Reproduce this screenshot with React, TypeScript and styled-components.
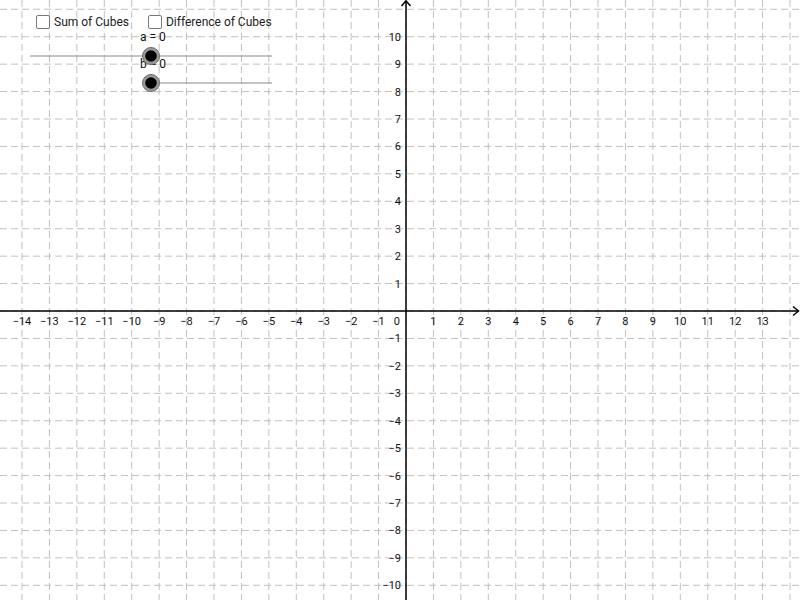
import React from "react";
import styled, { createGlobalStyle } from "styled-components";

const GlobalStyle = createGlobalStyle`
  html, body { margin: 0; padding: 0; background: #ffffff; overflow: hidden; }
  #root { width: 800px; height: 600px; }
`;

const Page = styled.div`
  position: relative;
  width: 800px;
  height: 600px;
  background: #ffffff;
  font-family: "Roboto", "Liberation Sans", sans-serif;
  overflow: hidden;
`;

const GraphSvg = styled.svg`
  display: block;
  width: 800px;
  height: 600px;
`;

const Controls = styled.div`
  position: absolute;
  top: 14.5px;
  left: 36px;
  display: flex;
  align-items: center;
  gap: 19px;
`;

const CheckItem = styled.label`
  display: flex;
  align-items: center;
  gap: 4px;
  font-size: 12px;
  color: #222;
  cursor: pointer;
  line-height: 14px;
`;

const Box = styled.span`
  display: inline-block;
  box-sizing: border-box;
  width: 14px;
  height: 14px;
  border: 1.5px solid #7a7a7a;
  border-radius: 2px;
  background: #fff;
`;

const OX = 406;
const OY = 311;
const U = 27.43;

const fmt = (n: number) => (n < 0 ? `\u2212${Math.abs(n)}` : `${n}`);

const Grid: React.FC = () => {
  const v: number[] = [];
  for (let k = -15; k <= 15; k++) v.push(k);
  return (
    <g stroke="#c0c0c0" strokeWidth={1} strokeDasharray="7 4">
      {v.map((k) => {
        const x = OX + k * U;
        return x >= 0 && x <= 800 ? (
          <line key={`v${k}`} x1={x} y1={0} x2={x} y2={600} />
        ) : null;
      })}
      {v.map((k) => {
        const y = OY + k * U;
        return y >= 0 && y <= 600 ? (
          <line key={`h${k}`} x1={0} y1={y} x2={800} y2={y} />
        ) : null;
      })}
    </g>
  );
};

const Axes: React.FC = () => (
  <g stroke="#000" strokeWidth={1.5} fill="none">
    <line x1={0} y1={OY} x2={798} y2={OY} />
    <line x1={OX} y1={1} x2={OX} y2={600} />
    <polyline points={`${793},${OY - 4.5} ${798.5},${OY} ${793},${OY + 4.5}`} />
    <polyline points={`${OX - 4.5},${6} ${OX},${0.8} ${OX + 4.5},${6}`} />
  </g>
);

const TickLabels: React.FC = () => {
  const xs: number[] = [];
  for (let k = -14; k <= 13; k++) if (k !== 0) xs.push(k);
  const ys: number[] = [];
  for (let k = -10; k <= 10; k++) if (k !== 0) ys.push(k);
  return (
    <g fontFamily="Roboto, 'Liberation Sans', sans-serif" fontSize={11} fill="#111">
      {xs.map((k) => (
        <text key={`x${k}`} x={OX + k * U} y={OY + 14} textAnchor="middle">
          {fmt(k)}
        </text>
      ))}
      {ys.map((k) => (
        <text key={`y${k}`} x={OX - 5} y={OY - k * U + 4} textAnchor="end">
          {fmt(k)}
        </text>
      ))}
      <text x={OX - 6} y={OY + 14} textAnchor="end">
        0
      </text>
    </g>
  );
};

const SliderPoint: React.FC<{ cx: number; cy: number }> = ({ cx, cy }) => (
  <g>
    <circle cx={cx} cy={cy} r={8.5} fill="#9a9a9a" stroke="#6a6a6a" strokeWidth={1} />
    <circle cx={cx} cy={cy} r={5.8} fill="#000" />
  </g>
);

const Sliders: React.FC = () => (
  <g>
    <g stroke="#8a8a8a" strokeWidth={1}>
      <line x1={30} y1={56} x2={272} y2={56} />
      <line x1={151} y1={83} x2={272} y2={83} />
    </g>
    <g fontFamily="Roboto, 'Liberation Sans', sans-serif" fontSize={12} fill="#111">
      <text x={140} y={41}>a = 0</text>
      <text x={140} y={68}>b = 0</text>
    </g>
    <SliderPoint cx={151} cy={56} />
    <SliderPoint cx={151} cy={83} />
  </g>
);

export default function App() {
  return (
    <>
      <GlobalStyle />
      <Page>
        <GraphSvg viewBox="0 0 800 600" xmlns="http://www.w3.org/2000/svg">
          <Grid />
          <Axes />
          <TickLabels />
          <Sliders />
        </GraphSvg>
        <Controls>
          <CheckItem>
            <Box />
            Sum of Cubes
          </CheckItem>
          <CheckItem>
            <Box />
            Difference of Cubes
          </CheckItem>
        </Controls>
      </Page>
    </>
  );
}
